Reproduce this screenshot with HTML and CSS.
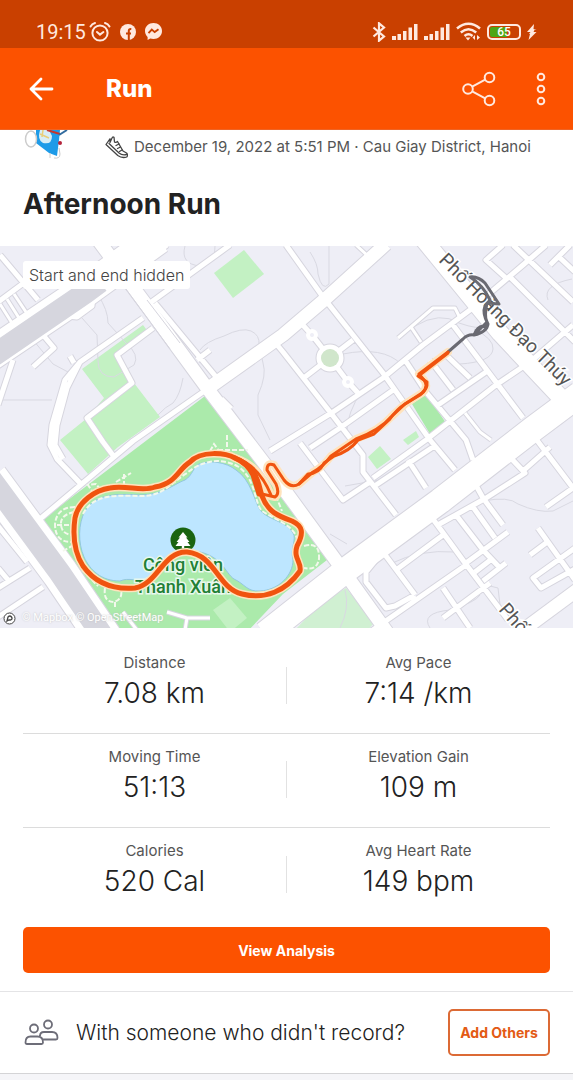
FILE: index.html
```html
<!DOCTYPE html>
<html lang="en">
<head>
  <meta charset="UTF-8" />
  <meta name="viewport" content="width=device-width, initial-scale=1.0"/>
  <title>Afternoon Run</title>
  <link rel="stylesheet" href="styles.css">
</head>
<body>
  <div class="status-bar">
    <div class="status-left">
      <span class="clock">19:15</span>
      <svg width="22" height="22" viewBox="0 0 22 22" fill="none" stroke="#ffe9df" stroke-width="2" stroke-linecap="round">
        <circle cx="11" cy="12" r="7.6"/>
        <path d="M8 11l3 2.6 3.4-2.6M1.5 5.5Q3 2.8 6 2M20.5 5.5Q19 2.8 16 2"/>
      </svg>
      <svg class="app-icon" width="16" height="16" viewBox="0 0 16 16">
        <circle cx="8" cy="8" r="8" fill="#ffe9df"/>
        <path d="M8.800 16V9.500M6 9.500h5M8.800 9V6.800Q8.800 4.800 11.300 5" fill="none" stroke="#c94000" stroke-width="2"/>
      </svg>
      <svg class="app-icon" width="17" height="17" viewBox="0 0 17 17">
        <path d="M8.500 0C3.700 0 0 3.500 0 8c0 2.500 1 4.500 2.600 5.900V17l2.600-1.500c1 .3 2.100.5 3.300.5 4.800 0 8.500-3.500 8.500-8S13.300 0 8.500 0z" fill="#ffe9df"/>
        <path d="M3.500 10.200L6.800 6.600l2.900 2.500 3.800-2.800" fill="none" stroke="#c94000" stroke-width="1.900"/>
      </svg>
    </div>
    <div class="status-right">
      <svg width="14" height="20" viewBox="0 0 14 20" fill="none" stroke="#ffe9df" stroke-width="2.200"><path d="M1.500 5.500l10.500 9-5 4.200V1.300l5 4.200-10.500 9"/></svg>
      <svg width="26" height="17" viewBox="0 0 26 17" fill="#ffe9df"><path d="M0 13h4v4H0zM5.500 11h3.500v6H5.500zM11 8h3.500v9H11zM16.500 4.500H20V17h-3.500zM22 1h3.500v16H22z"/></svg>
      <svg width="26" height="17" viewBox="0 0 26 17" fill="#ffe9df"><path d="M0 13h4v4H0zM5.500 11h3.500v6H5.500zM11 8h3.500v9H11zM16.500 4.500H20V17h-3.500zM22 1h3.500v16H22z"/></svg>
      <svg width="25" height="19" viewBox="0 0 25 19">
        <path d="M1 6.500Q12.500-3 24 6.500M4.800 10.500Q12.500 4 20.200 10.500M8.500 14Q12.500 10.500 16.500 14" fill="none" stroke="#ffe9df" stroke-width="2.500"/>
        <path d="M9.500 15.500h5L12 18.500zM19 13v5l-2.500-2.500zM21 13l3 2.500-3 2.500z" fill="#ffe9df"/>
      </svg>
      <div class="battery"><span>65</span></div>
      <svg width="10" height="16" viewBox="0 0 10 16" fill="#ffe9df"><path d="M7 0L0 8h3.500L2 10H0h3L1.500 16 9.500 8H6.500l1-2h2L6.500 5z"/></svg>
    </div>
  </div>

  <header>
    <button class="icon-btn" aria-label="Back">
      <svg width="26" height="24" viewBox="0 0 26 24" fill="none" stroke="#fff" stroke-width="2.800" stroke-linecap="round" stroke-linejoin="round"><path d="M24 12H3M13 2L3 12l10 10"/></svg>
    </button>
    <h1>Run</h1>
    <button class="icon-btn" aria-label="Share">
      <svg width="34" height="36" viewBox="0 0 34 36" fill="none" stroke="#ffe9df" stroke-width="2"><circle cx="6" cy="18" r="4.800"/><circle cx="27.500" cy="6.500" r="4.800"/><circle cx="27.500" cy="29.500" r="4.800"/><path d="M10.200 15.700l13-7M10.200 20.300l13 7"/></svg>
    </button>
    <button class="icon-btn" aria-label="More options">
      <svg width="10" height="34" viewBox="0 0 10 34" fill="none" stroke="#ffe9df" stroke-width="2"><circle cx="5" cy="5" r="3.300"/><circle cx="5" cy="17" r="3.300"/><circle cx="5" cy="29" r="3.300"/></svg>
    </button>
  </header>

  <main>
    <section class="summary">
      <div class="meta">
        <svg class="avatar" width="46" height="30" viewBox="0 0 46 30">
          <path d="M13 0h24l-1 10-2 16-8-3-13-10z" fill="#1e9be8"/>
          <path d="M17 0q-3 10 3 13 9 2 9-7l-3-6z" fill="#d8edf5"/>
          <path d="M24 0l13 4" stroke="#c8372d" stroke-width="2"/>
          <path d="M44 0l-8 5" stroke="#316b9e" stroke-width="2"/>
          <path d="M17 4l9 4M20 0l-1 7" stroke="#e9ce77" stroke-width="1.500"/>
          <circle cx="37" cy="13" r="2" fill="#b4233b"/>
          <ellipse cx="8" cy="9" rx="5.500" ry="8" fill="#fff" stroke="#ccc" stroke-width="1.500"/>
          <path d="M27 23v5M31 28q6 1 6-4l-1-6" fill="none" stroke="#ccc"/>
        </svg>
        <svg class="shoe" width="23" height="23" viewBox="0 0 23 23" fill="none" stroke="#444" stroke-width="1.300" stroke-linejoin="round" stroke-linecap="round">
          <path d="M1 8.500L5 2.800V6.500L7 2Q7.500.5 9 1.300L9.500 6Q11 7 12.500 5.500L18 15l3.500 2q1.800 1.800.3 4-5 1.500-9-1.500z"/>
          <path d="M4 7.500l10 9.500q3 2.500 7.500 1.500M14 8l-3 1.500M15.500 11l-3 1.500M17 14l-2.500 1.500"/>
        </svg>
        <p>December 19, 2022 at 5:51 PM · Cau Giay District, Hanoi</p>
      </div>
      <h2>Afternoon Run</h2>
    </section>

    <section class="map">
      <svg class="map-canvas" viewBox="0 246 573 382" preserveAspectRatio="xMidYMid slice" role="img" aria-label="Route map">
        <defs>
          <path id="road-wide" d="M265 634L350 567 440 501 533 429 580 394"/>
          <path id="road-main" d="M98 240L150 310 207 388 283 488 337 562 387 632M203 392L283 335 323 301 386 244"/>
          <path id="road-named" d="M424 240L500 333 562 399"/>
          <path id="road-left" d="M-10 355L85 291 158 238"/>
          <path id="road-highway" d="M-10 478L60 573 104 638"/>
          <path id="road-small" d="M286 245L323 297 383 373 430 440 455 470M273 340L283 352 330 412 350 438 363 455V472L396 515M300 443L343 500 370 482
            M270 451L333 412 383 378 423 345 470 310 523 265 546 245M396 388L340 428 310 448M300 322L312 335 330 358 348 382 358 393M353 340L305 377
            M405 360L426 392 466 440 473 460M430 360L453 390M453 325L523 418M446 355L470 378M438 405L486 372M373 478L426 440 496 385 530 362 573 325
            M510 277L575 342M506 278L486 260 503 245M513 245L573 302M550 265L570 245M558 256L575 272
            M408 460L426 488M376 485L436 445M473 480L483 498 503 525M483 500L525 473 508 455M533 435L573 488 546 507M523 471L550 447
            M430 515L441 530 465 563 508 620M436 526L486 498M456 515L483 550 500 568M473 507L495 538M466 563L508 532M483 581L506 563M475 572L493 558
            M396 570L443 535M383 552L415 595M380 555L366 572V582L386 608 395 606 415 595M370 632L466 565M443 618L490 583M443 588L470 628
            M530 555L546 543M538 528L575 580M575 548L533 578 541 588 575 569
            M0 255L38 300M-2 302L25 282M66 316L77 317 92 306 93 295M43 335L54 348 33 367M153 328L117 355 132 383 87 418 103 442 115 458M70 356L74 363
            M150 303L230 245M146 248L155 254 167 245M155 303L217 378M197 360L210 350M13 360L-2 405M-2 526L27 562M30 568L-2 588M43 587L-2 617M-2 568L9 581
            M40 519L133 441 203 392M143 318L80 362 65 380 52 425 50 445 57 459 80 483M80 362L67 388 57 425 55 445 63 459"/>
          <path id="road-tiny" d="M0 304L12 323M7 299L19 318M14 294L26 312M356 245L368 256M398 338L433 308H455L460 318M411 327L421 342M465 413L480 432 491 440M123 612L137 630M167 612L187 618H210M187 618L185 630M222 398L232 408"/>
          <path id="loop" d="M235 458C226 453 201 450 190 462C178 469 177 483 155 487C143 492 126 485 110 488C95 490 78 502 75 518C73 532 73 550 83 566C93 580 110 590 135 588C158 584 163 551 187 552C216 555 217 588 242 594C265 600 286 591 300 571C302 562 293 559 297 546C304 533 303 526 292 521C278 516 268 512 262 496C259 487 258 466 235 458"/>
          <path id="street-run" d="M235 458C252 463 264 478 271 495M262 494L275 497Q280 494 276 484L267 470Q267 462 274 465L284 480Q291 489 299 484L313 472Q323 467 331 456L356 439Q380 430 391 417L405 404 422 393Q429 387 424 380L419 374 448 352"/>
        </defs>

        <rect class="land" x="-200" y="46" width="973" height="782"/>

        <g class="park-light">
          <path d="M214 273L244 250 264 274 233 298z"/>
          <path d="M82 369L143 325 149 333 117 357 131 382 134 383 160 417 118 447 88 474 60 440 86 419 104 398z"/>
          <path d="M368 457L380 446 391 459 377 469zM403 440L416 431 419 437 408 445z"/>
          <path d="M293 632L320 604 346 588 374 623 366 632z" opacity=".7"/>
        </g>
        <path class="park" d="M412 404L426 394 446 423 430 434z"/>
        <path class="park" d="M43 519L205 396 283 500 327 560 283 594 247 632H120z"/>
        <path class="park-light" d="M213 610L230 598 247 618 230 632z"/>

        <path class="contour" d="M98 295q10 15 10 28l18 20q14 12 8 22l-20 12q-16 0-16-16l-1-26-15-17M33 340l20 24 15 8M0 400h52M183 378q-3 17-10 25-8 4-15 12M200 350q5-8 24-14 18-9 27-5 9 4 8 14l4 18q4 12-5 32v20l12 25M185 246q-5 18 15 20 16-1 15-20M310 252q8 12 8 22 4 18 11 10V246M343 354q40-8 58 10l-20 15M362 390q-15 24-15 40M415 326q25-15 44-3 20 7 25 3M460 364q32-2 33-15 1-10-19-20M548 300q-6-15 24-21M345 486l40-7M440 520q30-15 43-19 26-5 35 3 20 9 35 7l20-10M390 564q30-15 65-12M430 628q-10-15 20-18 26-8 30-15M490 586l8 2 3 25M345 590q5 18-5 38M330 534l17 10"/>

        <use href="#road-tiny" class="casing w-tiny"/>
        <use href="#road-small" class="casing w-small"/>
        <use href="#road-main" class="casing w-main"/>
        <use href="#road-named" class="casing w-named"/>
        <use href="#road-wide" class="casing w-wide"/>
        <use href="#road-left" class="casing w-left"/>
        <use href="#road-highway" class="casing w-highway"/>
        <path class="casing w-main" d="M515 636L580 588"/>
        <circle class="casing w-small" cx="330" cy="358" r="11"/>
        <use href="#road-tiny" class="road w-tiny"/>
        <use href="#road-small" class="road w-small"/>
        <use href="#road-main" class="road w-main"/>
        <use href="#road-named" class="road w-named"/>
        <use href="#road-wide" class="road w-wide"/>
        <use href="#road-left" class="road w-left"/>
        <use href="#road-highway" class="road w-highway"/>
        <path class="road w-main" d="M515 636L580 588"/>
        <path class="median" d="M-10 358L85 293 100 282"/>
        <path class="median" d="M-10 478L60 573 104 638"/>
        <path class="lane" d="M123 285L170 349M147 300L180 343"/>
        <circle cx="330" cy="358" r="11" class="road w-small"/>
        <circle cx="330" cy="358" r="9" fill="#d0e6cb"/>
        <g class="node"><circle cx="312" cy="335" r="4"/><circle cx="348" cy="382" r="4"/></g>

        <path class="lake" d="M199 464C210 460 226 462 236 470C251 480 254 500 260 510C266 519 288 522 293 533C297 539 290 548 293 560C293 575 279 590 260 591C247 592 245 584 234 579C225 573 222 555 195 551C169 547 160 571 149 580C137 582 129 577 120 581C101 581 90 570 84 557C78 543 78 524 85 511C94 496 111 493 139 495C163 495 172 485 185 480C193 475 193 467 199 464z"/>
        <g class="trail">
          <path d="M83 514C94 492 120 496 143 496C165 495 172 482 187 473C205 458 224 459 237 466C256 477 254 503 262 511C272 518 296 526 297 540"/>
          <path d="M75 507q-18 0-20 17 0 18 16 18M74 512q-14 3-13 13 1 10 13 10M57 525h16M63 551l14-8M94 494l-6-9 8-1 4 5M116 482l15-9M124 474v13M227 435v17M210 451l4-7 5 7M218 450h30M105 588q-2 14 9 14 9-3 7-12M115 602v7M276 496l6 15M304 546q16-5 15 13-2 12-15 9M82 570l16 16"/>
        </g>

        <g class="street-label">
          <text transform="translate(438 261) rotate(45)">Phố Hoàng Đạo Thúy</text>
          <text transform="translate(498 610) rotate(49)">Phố</text>
        </g>

        <circle cx="183" cy="540" r="12.500" fill="#1a6410"/>
        <path d="M183 532l4.500 5.500H186l3.500 4.500h-2l3 4h-6.300v2.500h-2.400V546h-6.300l3-4h-2l3.500-4.500h-1.500z" fill="#fff"/>
        <g class="park-label">
          <text x="183" y="571">Công viên</text>
          <text x="183" y="593">Thanh Xuân</text>
        </g>

        <g class="route">
          <use href="#loop" class="halo"/>
          <use href="#street-run" class="halo"/>
          <path class="gps hidden-part" d="M448 352L463 339Q468 334 474 335 487 332 488 324 482 313 485 306L490 300Q483 285 470 277 478 276 485 283L499 304 487 303Q484 317 487 322L475 334M474 335Q478 324 487 327"/>
          <use href="#loop" class="gps"/>
          <path class="gps" d="M235 458Q248 464 253 475L259 494"/>
          <use href="#street-run" class="gps thin"/>
          <path class="gps thin" d="M299 484L308 474Q319 474 324 463L334 456Q350 451 358 440L374 434 389 420Q397 409 405 404L420 395Q428 389 427 382L418 376M421 374L448 353"/>
        </g>
      </svg>
      <span class="map-note">Start and end hidden</span>
      <span class="attribution">
        <svg width="13" height="13" viewBox="0 0 13 13"><circle cx="6.500" cy="6.500" r="5.500" fill="#fff" stroke="#444"/><path d="M4 9l1-4q2-2 3.500 0t-1 3H6z" fill="none" stroke="#444" stroke-width="1.300"/></svg>
        © Mapbox © OpenStreetMap
      </span>
    </section>

    <section class="stats">
      <div class="stat-row">
        <div class="stat"><span class="label">Distance</span><span class="value">7.08 km</span></div>
        <div class="stat"><span class="label">Avg Pace</span><span class="value">7:14 /km</span></div>
      </div>
      <div class="stat-row">
        <div class="stat"><span class="label">Moving Time</span><span class="value">51:13</span></div>
        <div class="stat"><span class="label">Elevation Gain</span><span class="value">109 m</span></div>
      </div>
      <div class="stat-row">
        <div class="stat"><span class="label">Calories</span><span class="value">520 Cal</span></div>
        <div class="stat"><span class="label">Avg Heart Rate</span><span class="value">149 bpm</span></div>
      </div>
      <button class="analysis-btn">View Analysis</button>
    </section>

    <section class="others">
      <svg width="35" height="27" viewBox="0 0 35 27" fill="none" stroke="#6d6d78" stroke-width="1.800" stroke-linejoin="round">
        <circle cx="10" cy="9.500" r="4"/><circle cx="24" cy="5.500" r="4"/>
        <path d="M1.500 23.500q0-6 5-6h7q5.500 0 5.500 6 0 1.500-1.500 1.500H3q-1.500 0-1.500-1.500zM16 17q0-4 4-4h8q5.500 0 5.500 6 0 1.500-1.500 1.500H18.500"/>
      </svg>
      <p>With someone who didn't record?</p>
      <button class="add-btn">Add Others</button>
    </section>
  </main>
</body>
</html>
```
FILE: styles.css
```css
* {
  margin: 0;
  padding: 0;
  box-sizing: border-box;
}
body {
  background: #f5f5f8;
  color: #222;
  font-family: Inter, "Open Sans", sans-serif;
}
button {
  font-family: inherit;
  cursor: pointer;
}
svg {
  flex: none;
}
.status-bar {
  background: #c94000;
  color: #ffe9df;
  height: 48px;
  padding: 15px 36px 0;
  display: flex;
  justify-content: space-between;
}
.status-left,
.status-right {
  display: flex;
  align-items: center;
  height: 33px;
}
.status-left {
  gap: 3px;
}
.status-right {
  gap: 6px;
}
.clock {
  font: 20px Roboto, sans-serif;
}
.app-icon {
  margin-left: 6px;
}
.battery {
  width: 34px;
  height: 16px;
  border: 2px solid #ffe9df;
  border-radius: 5px;
  background: linear-gradient(90deg, #4ba614 62%, transparent 62%) content-box;
  padding: 1px;
  color: white;
  font: 500 12px/10px Roboto, sans-serif;
  text-align: center;
}
header {
  background: #fc5200;
  color: white;
  height: 82px;
  padding: 0 27px 0 28px;
  display: flex;
  align-items: center;
  border-bottom: 1px solid #ee6425;
}
.icon-btn {
  background: none;
  border: none;
  display: flex;
}
header h1 {
  flex: 1;
  margin-left: 52px;
  font-size: 24px;
  font-weight: 800;
}
header .icon-btn + .icon-btn {
  margin-left: 40px;
}
main {
  background: white;
}
.summary {
  height: 116px;
  padding: 0 23px;
}
.meta {
  display: flex;
  align-items: flex-start;
  height: 50px;
}
.shoe {
  margin: 6px 6px 0 36px;
}
.meta p {
  padding-top: 7px;
  font-size: 15px;
  line-height: 20px;
  color: #555;
  white-space: nowrap;
}
.summary h2 {
  font-size: 28px;
  line-height: 48px;
  font-weight: 700;
}
.map {
  position: relative;
  height: 382px;
  overflow: hidden;
}
.map-canvas {
  display: block;
  width: 100%;
  height: 100%;
}
.land {
  fill: #eeeef6;
}
.park {
  fill: #abeaab;
}
.park-light {
  fill: #c3f1c3;
}
.lake {
  fill: #bde6ff;
  stroke: #93c7df;
}
.contour {
  fill: none;
  stroke: #d9d9e2;
}
.casing,
.road {
  fill: none;
  stroke: white;
  stroke-linejoin: round;
}
.casing {
  stroke: #d6d5de;
}
.road.w-tiny { stroke-width: 3; }
.casing.w-tiny { stroke-width: 5; }
.road.w-small { stroke-width: 5; }
.casing.w-small { stroke-width: 7; }
.road.w-main { stroke-width: 13; }
.casing.w-main { stroke-width: 15; }
.road.w-named { stroke-width: 17; }
.casing.w-named { stroke-width: 19; }
.road.w-wide { stroke-width: 25; }
.casing.w-wide { stroke-width: 27; }
.road.w-left { stroke-width: 32; }
.casing.w-left { stroke-width: 34; }
.road.w-highway { stroke-width: 36; }
.casing.w-highway { stroke-width: 38; }
.median {
  fill: none;
  stroke: #d6d6de;
  stroke-width: 22;
}
.lane {
  fill: none;
  stroke: #d6d5de;
}
.node circle {
  fill: #eeeef6;
  stroke: white;
  stroke-width: 4;
}
.trail {
  fill: none;
  stroke: #f3f8ec;
  stroke-width: 2;
  stroke-dasharray: 5 2;
}
.street-label {
  font: 19px Roboto, "Noto Sans", sans-serif;
  fill: #555;
  stroke: white;
  stroke-width: 3;
  paint-order: stroke;
}
.park-label {
  font: 500 18px Roboto, "Noto Sans", sans-serif;
  fill: #218035;
  stroke: #e8f8ee;
  stroke-width: 3;
  paint-order: stroke;
  text-anchor: middle;
}
.route {
  fill: none;
  stroke-linecap: round;
  stroke-linejoin: round;
}
.halo {
  stroke: #ffe3bd;
  stroke-width: 8;
}
.gps {
  stroke: #f0540f;
  stroke-width: 5;
}
.gps.thin {
  stroke-width: 3;
}
.gps.hidden-part {
  stroke: #6a6a72;
  stroke-width: 3;
}
.map-note {
  position: absolute;
  left: 23px;
  top: 15px;
  padding: 0 6px;
  background: white;
  border-radius: 3px;
  color: #444;
  font-size: 16px;
  font-weight: 300;
  line-height: 28px;
}
.attribution {
  position: absolute;
  left: 3px;
  bottom: 3px;
  display: flex;
  align-items: center;
  gap: 6px;
  color: white;
  font: 11px/14px Roboto, sans-serif;
  text-shadow: 0 0 2px #bbb;
}
.stats {
  padding: 12px 23px 18px;
  border-bottom: 1px solid #e4e4e6;
}
.stat-row {
  display: flex;
  align-items: center;
  height: 94px;
  padding-bottom: 8px;
  border-bottom: 1px solid #dcdcdc;
}
.stat-row:nth-child(3) {
  border-bottom: none;
}
.stat {
  flex: 1;
  display: flex;
  flex-direction: column;
  align-items: center;
}
.stat-row::before {
  content: "";
  order: 1;
  width: 1px;
  height: 37px;
  margin-top: 6px;
  background: #e2e2e2;
}
.stat + .stat {
  order: 2;
}
.stat .label {
  font-size: 15px;
  line-height: 20px;
  color: #555;
}
.stat .value {
  font-size: 28px;
  line-height: 40px;
  font-weight: 300;
}
.analysis-btn {
  width: 100%;
  height: 46px;
  margin-top: 5px;
  display: block;
  background: #fc5200;
  color: white;
  border: none;
  border-radius: 5px;
  font-size: 14px;
  font-weight: 700;
}
.others {
  display: flex;
  align-items: center;
  height: 82px;
  padding: 0 23px 0 24px;
  border-bottom: 1px solid #d4d4d6;
}
.others p {
  flex: 1;
  margin-left: 17px;
  font-size: 21px;
  font-weight: 300;
  white-space: nowrap;
}
.add-btn {
  width: 102px;
  height: 47px;
  background: white;
  color: #e35a14;
  border: 2px solid #dc6a35;
  border-radius: 5px;
  font-size: 14px;
  font-weight: 700;
  white-space: nowrap;
}
```
